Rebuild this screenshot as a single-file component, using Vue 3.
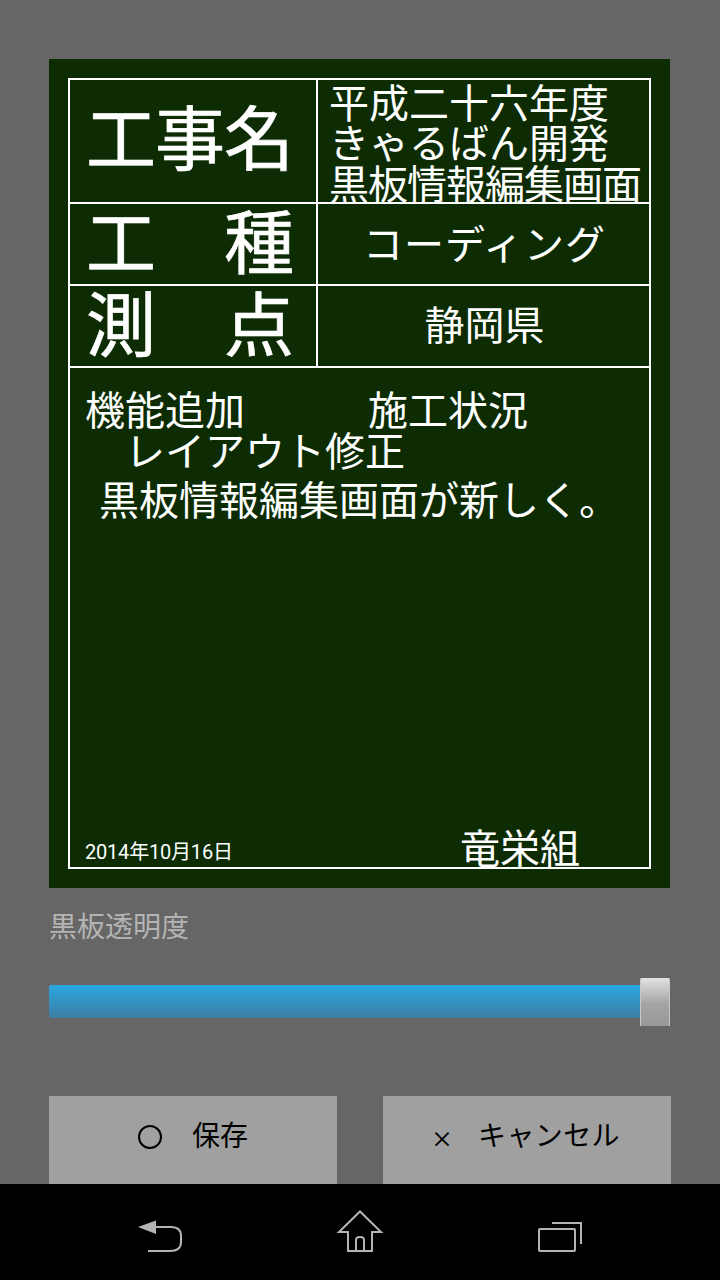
<script setup>
const titleLines = ['平成二十六年度', 'きゃるばん開発', '黒板情報編集画面']
</script>

<template>
  <div class="screen">
    <main class="content">
      <section class="board">
        <div class="sheet">
          <div class="row row-title">
            <div class="label label-name">工事名</div>
            <div class="value value-title">
              <div v-for="line in titleLines" :key="line" class="title-line">{{ line }}</div>
            </div>
          </div>
          <div class="row row-mid">
            <div class="label label-spread"><span>工</span><span>種</span></div>
            <div class="value value-center value-work">コーディング</div>
          </div>
          <div class="row row-mid">
            <div class="label label-spread"><span>測</span><span>点</span></div>
            <div class="value value-center value-place">静岡県</div>
          </div>
          <div class="notes">
            <div class="note-one"><span class="note-a">機能追加</span><span>施工状況</span></div>
            <div class="note-two">レイアウト修正</div>
            <div class="note-three">黒板情報編集画面が新しく。</div>
            <div class="sign">
              <span class="date">2014年10月16日</span>
              <span class="company">竜栄組</span>
            </div>
          </div>
        </div>
      </section>

      <div class="opacity-label">黒板透明度</div>

      <div class="slider">
        <div class="track"></div>
        <div class="thumb"></div>
      </div>

      <div class="actions">
        <button class="action action-save"><span class="circle"></span><span>保存</span></button>
        <button class="action action-cancel"><span class="times">×</span><span class="cancel-text">キャンセル</span></button>
      </div>
    </main>

    <nav class="navbar">
      <svg class="nav-icon nav-back" viewBox="0 0 48 34" width="48" height="34">
        <path d="M1 7 L19 0.5 L19 14 Z" fill="#b4b4b4" />
        <path d="M17 7 H34 Q44 7 44 16 V22 Q44 31 33 31 H11" fill="none" stroke="#b4b4b4" stroke-width="2" />
      </svg>
      <svg class="nav-icon nav-home" viewBox="0 0 48 44" width="48" height="44">
        <path d="M3 22 L24 1.5 L45 22 H36 V41 H12 V22 Z" fill="none" stroke="#b4b4b4" stroke-width="2" />
        <path d="M20 41 V30 Q20 27 24 27 Q28 27 28 30 V41" fill="none" stroke="#b4b4b4" stroke-width="2" />
      </svg>
      <svg class="nav-icon nav-recent" viewBox="0 0 46 32" width="46" height="32">
        <rect x="2" y="8" width="36" height="22" rx="1" fill="none" stroke="#b4b4b4" stroke-width="2" />
        <path d="M15 2 H44 V23" fill="none" stroke="#b4b4b4" stroke-width="2" />
      </svg>
    </nav>
  </div>
</template>

<style>
html, body { margin: 0; background: #666666; }
</style>

<style scoped>
.screen {
  width: 720px;
  height: 1280px;
  background: #666666;
  display: flex;
  flex-direction: column;
  overflow: hidden;
  font-family: "Noto Sans CJK JP", "Noto Sans", sans-serif;
}
.content {
  flex: 1;
  min-height: 0;
  padding: 59px 49px 0;
  box-sizing: border-box;
}
.board {
  width: 621px;
  height: 829px;
  background: #0d2c04;
  padding: 19px;
  box-sizing: border-box;
  color: #ffffff;
}
.sheet {
  width: 583px;
  height: 791px;
  border: 2px solid #ffffff;
  box-sizing: border-box;
  display: flex;
  flex-direction: column;
}
.row {
  display: grid;
  grid-template-columns: 248px 1fr;
  border-bottom: 2px solid #ffffff;
  box-sizing: border-box;
}
.row-title { height: 124px; }
.row-mid { height: 82px; }
.label {
  border-right: 2px solid #ffffff;
  font-size: 70px;
  line-height: 80px;
  padding: 0 22px 0 16px;
  display: flex;
  align-items: center;
  overflow: hidden;
  -webkit-text-stroke: 0.7px #ffffff;
}
.label span { margin-top: -11px; }
.label-name { padding-bottom: 14px; white-space: nowrap; letter-spacing: -1px; }
.label-spread { justify-content: space-between; }
.value { font-size: 40px; line-height: 40px; min-width: 0; }
.value-title {
  padding: 1px 0 0 11px;
  height: 122px;
  overflow: hidden;
}
.title-line { white-space: nowrap; height: 40px; }
.title-line:last-child { letter-spacing: -1px; margin-top: 1px; }
.value-center {
  display: flex;
  align-items: center;
  justify-content: center;
}
.value-work { padding: 0 0 4px 2px; letter-spacing: 1px; }
.value-place { padding: 0 0 6px 2px; }
.notes {
  flex: 1;
  font-size: 40px;
  line-height: 40px;
  display: flex;
  flex-direction: column;
  padding-top: 20px;
  white-space: nowrap;
}
.note-one { padding-left: 15px; display: flex; }
.note-a { width: 283px; }
.note-two { padding-left: 55px; margin-top: 1px; }
.note-three { padding-left: 29px; margin-top: 9px; }
.sign {
  margin-top: auto;
  display: flex;
  align-items: flex-end;
  padding: 0 0 1px 15px;
  height: 40px;
}
.date {
  font-family: Roboto, "Noto Sans CJK JP", sans-serif;
  font-size: 20px;
  line-height: 30px;
  letter-spacing: -0.2px;
  width: 375px;
  margin-bottom: -1px;
}
.company { font-size: 40px; line-height: 40px; }
.opacity-label {
  color: #b4b4b4;
  font-size: 28px;
  line-height: 40px;
  margin-top: 17px;
}
.slider {
  position: relative;
  width: 621px;
  height: 48px;
  margin-top: 33px;
}
.track {
  position: absolute;
  left: 0;
  top: 7px;
  width: 592px;
  height: 33px;
  border-radius: 2px 0 0 2px;
  background: linear-gradient(#2ba6e0, #3d7fa3);
}
.thumb {
  position: absolute;
  right: 0;
  top: 0;
  width: 30px;
  height: 48px;
  border-radius: 2px 2px 0 0;
  background: linear-gradient(#e2e2e2, #a3a3a3 55%, #999999);
  box-shadow: inset 1px 0 0 #c8c8c8, inset -1px 0 0 #c8c8c8;
}
.actions {
  display: flex;
  gap: 46px;
  margin-top: 70px;
}
.action {
  width: 288px;
  height: 88px;
  border: 0;
  padding: 0 0 12px;
  background: #a0a0a0;
  color: #000000;
  font: inherit;
  font-size: 28px;
  line-height: 40px;
  display: flex;
  align-items: center;
  justify-content: center;
}
.action-save { gap: 30px; }
.action-cancel { gap: 28px; padding-right: 6px; }
.cancel-text { letter-spacing: 0.4px; }
.circle {
  width: 20px;
  height: 20px;
  border: 2px solid #000000;
  border-radius: 50%;
  margin-top: 6px;
}
.times { font-size: 22px; line-height: 40px; margin: 6px -3px 0 3px; font-weight: 500; }
.navbar {
  height: 96px;
  flex: none;
  background: #000000;
  position: relative;
}
.nav-icon { position: absolute; }
.nav-back { left: 137px; top: 36px; }
.nav-home { left: 336px; top: 26px; }
.nav-recent { left: 537px; top: 37px; }
</style>
